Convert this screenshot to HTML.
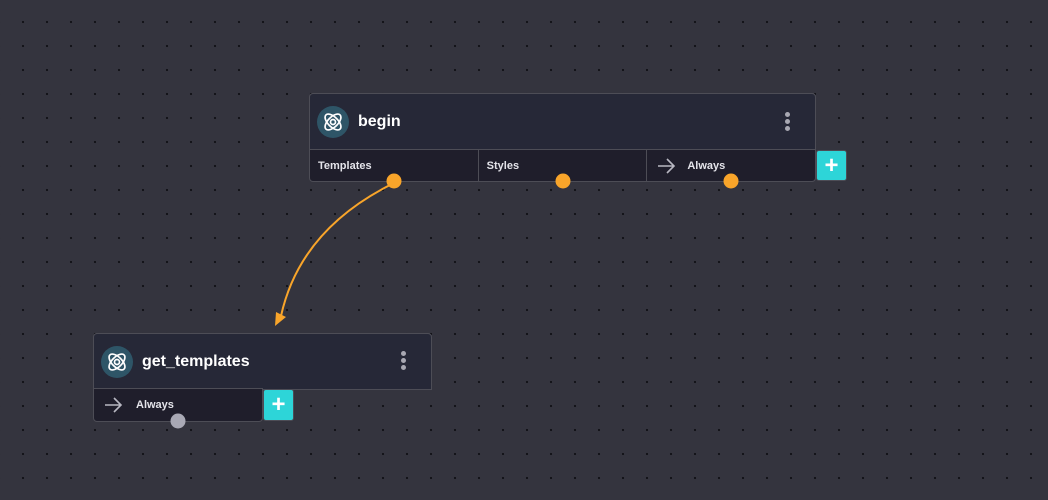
<!DOCTYPE html>
<html><head><style>
body{margin:0;width:1048px;height:500px;overflow:hidden;background-color:#34343e;
background-image:radial-gradient(circle,#121218 1px,transparent 1.3px);background-size:24px 24px;background-position:11px 10px;
font-family:"Liberation Sans",sans-serif;position:relative}
.box{position:absolute;border:1.5px solid #4d4d56;box-sizing:border-box}
.hdr{background:#262837;border-radius:4px 4px 0 0;display:flex;align-items:center}
.ic{width:32px;height:32px;border-radius:50%;background:#2e5567;margin-left:7px;display:flex;align-items:center;justify-content:center}
.title{color:#fff;font-weight:bold;font-size:16px;margin-left:9px}
.keb{position:absolute;width:5px;height:5px;border-radius:50%;background:#a8a8b2}
.ports{background:#1f1e2b;display:flex;border-radius:0 0 4px 4px}
.port{flex:1;border-right:1.5px solid #4d4d56;color:#e4e4ea;font-size:11px;font-weight:bold;display:flex;align-items:center;padding-left:8px;position:relative}
.port:last-child{border-right:none}
.plus{position:absolute;width:31px;height:31px;background:#2dd5d8;border-radius:3px;border:1px solid #4d4d56;box-sizing:border-box;color:#fff;font-size:24px;font-weight:bold;display:flex;align-items:center;justify-content:center}
</style></head><body>
<svg width="0" height="0" style="position:absolute"><defs><g id="atom"><g fill="none" stroke="#fff" stroke-width="1.7"><ellipse cx="0" cy="0" rx="10" ry="5" transform="rotate(45)"/><ellipse cx="0" cy="0" rx="10" ry="5" transform="rotate(-45)"/><circle r="2.5"/></g></g>
<g id="arr"><path d="M1 8H17M10 1L17 8L10 15" fill="none" stroke="#b8b8c2" stroke-width="1.6"/></g></defs></svg>

<div class="box hdr" style="left:309px;top:93px;width:507px;height:58px">
 <div class="ic"><svg width="26" height="26" viewBox="-13 -13 26 26"><use href="#atom"/></svg></div><div class="title">begin</div>
 <div class="keb" style="left:475px;top:18px"></div><div class="keb" style="left:475px;top:25px"></div><div class="keb" style="left:475px;top:32px"></div>
</div>
<div class="box ports" style="left:309px;top:149px;width:507px;height:33px">
  <div class="port">Templates</div><div class="port">Styles</div>
  <div class="port"><svg width="20" height="16" style="margin-left:2px;margin-right:10px"><use href="#arr"/></svg>Always</div>
</div>
<div class="plus" style="left:816px;top:150px">+</div>

<div class="box hdr" style="left:93px;top:333px;width:339px;height:57px">
 <div class="ic"><svg width="26" height="26" viewBox="-13 -13 26 26"><use href="#atom"/></svg></div><div class="title">get_templates</div>
 <div class="keb" style="left:307px;top:17px"></div><div class="keb" style="left:307px;top:24px"></div><div class="keb" style="left:307px;top:31px"></div>
</div>
<div class="box ports" style="left:93px;top:388px;width:170px;height:34px">
  <div class="port"><svg width="20" height="16" style="margin-left:2px;margin-right:12px"><use href="#arr"/></svg>Always</div>
</div>
<div class="plus" style="left:263px;top:389px;height:32px">+</div>

<svg width="1048" height="500" style="position:absolute;left:0;top:0">
 <path d="M392 184 Q300 230 281 316" fill="none" stroke="#f9a52a" stroke-width="2"/>
 <path d="M275 326 L276 312 L286 317 Z" fill="#f9a52a"/>
 <circle cx="394" cy="181" r="7.5" fill="#f9a52a"/>
 <circle cx="563" cy="181" r="7.5" fill="#f9a52a"/>
 <circle cx="731" cy="181" r="7.5" fill="#f9a52a"/>
 <circle cx="178" cy="421" r="7.5" fill="#a9a9b5"/>
</svg>
</body></html>
